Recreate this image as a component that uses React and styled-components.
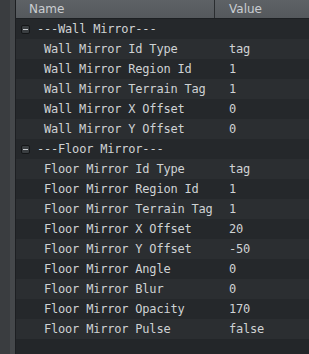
import React from "react";
import styled, { createGlobalStyle } from "styled-components";

const Global = createGlobalStyle`
  html, body { margin: 0; padding: 0; background: #222528; }
  #root { width: 309px; height: 354px; }
`;

const Frame = styled.div`
  display: flex;
  width: 309px;
  height: 354px;
  overflow: hidden;
  background: #232629;
`;

const Rail = styled.div`
  width: 10px;
  flex: none;
  background: #3a3d40;
`;

const RailEdge = styled.div`
  width: 5px;
  flex: none;
  background: #45484b;
  border-right: 1px solid #1d1f22;
`;

const Table = styled.div`
  flex: 1;
  display: flex;
  flex-direction: column;
  min-width: 0;
`;

const Header = styled.div`
  display: grid;
  grid-template-columns: 199px 1fr;
  height: 18px;
  background: linear-gradient(#5e6266, #55595d);
  border-bottom: 1px solid #1d2023;
  font-family: "DejaVu Sans", sans-serif;
  font-size: 12px;
  color: #c9cdd1;
`;

const HeadCell = styled.div`
  display: flex;
  align-items: center;
  padding-left: ${(p) => p.$pad}px;
  border-right: ${(p) => (p.$divider ? "1px solid #2a2d30" : "none")};
`;

const Row = styled.div`
  display: grid;
  grid-template-columns: 199px 1fr;
  height: 20px;
  align-items: center;
  background: ${(p) => (p.$odd ? "#2b2e31" : "#25282b")};
  font-family: "DejaVu Sans Mono", monospace;
  font-size: 12px;
  letter-spacing: -0.2px;
  color: #cfd2d4;
  white-space: nowrap;
`;

const NameCell = styled.div`
  display: flex;
  align-items: center;
  padding-left: ${(p) => p.$pad}px;
  overflow: hidden;
`;

const ValueCell = styled.div`
  padding-left: 14px;
`;

const Toggle = styled.span`
  flex: none;
  width: 9px;
  height: 9px;
  box-sizing: border-box;
  border: 1px solid #141618;
  border-radius: 2px;
  background: #3a3e41;
  margin-right: 7px;
  display: flex;
  align-items: center;
  justify-content: center;
  &::after {
    content: "";
    width: 5px;
    height: 1px;
    background: #c8ccd0;
  }
`;

const rows = [
  { group: "---Wall Mirror---" },
  { name: "Wall Mirror Id Type", value: "tag" },
  { name: "Wall Mirror Region Id", value: "1" },
  { name: "Wall Mirror Terrain Tag", value: "1" },
  { name: "Wall Mirror X Offset", value: "0" },
  { name: "Wall Mirror Y Offset", value: "0" },
  { group: "---Floor Mirror---" },
  { name: "Floor Mirror Id Type", value: "tag" },
  { name: "Floor Mirror Region Id", value: "1" },
  { name: "Floor Mirror Terrain Tag", value: "1" },
  { name: "Floor Mirror X Offset", value: "20" },
  { name: "Floor Mirror Y Offset", value: "-50" },
  { name: "Floor Mirror Angle", value: "0" },
  { name: "Floor Mirror Blur", value: "0" },
  { name: "Floor Mirror Opacity", value: "170" },
  { name: "Floor Mirror Pulse", value: "false" },
];

export default function App() {
  return (
    <Frame>
      <Global />
      <Rail />
      <RailEdge />
      <Table>
        <Header>
          <HeadCell $pad={13} $divider>Name</HeadCell>
          <HeadCell $pad={14}>Value</HeadCell>
        </Header>
        {rows.map((r, i) =>
          r.group ? (
            <Row key={i} $odd={i % 2 === 1}>
              <NameCell $pad={5}>
                <Toggle />
                {r.group}
              </NameCell>
              <ValueCell />
            </Row>
          ) : (
            <Row key={i} $odd={i % 2 === 1}>
              <NameCell $pad={28}>{r.name}</NameCell>
              <ValueCell>{r.value}</ValueCell>
            </Row>
          )
        )}
      </Table>
    </Frame>
  );
}
